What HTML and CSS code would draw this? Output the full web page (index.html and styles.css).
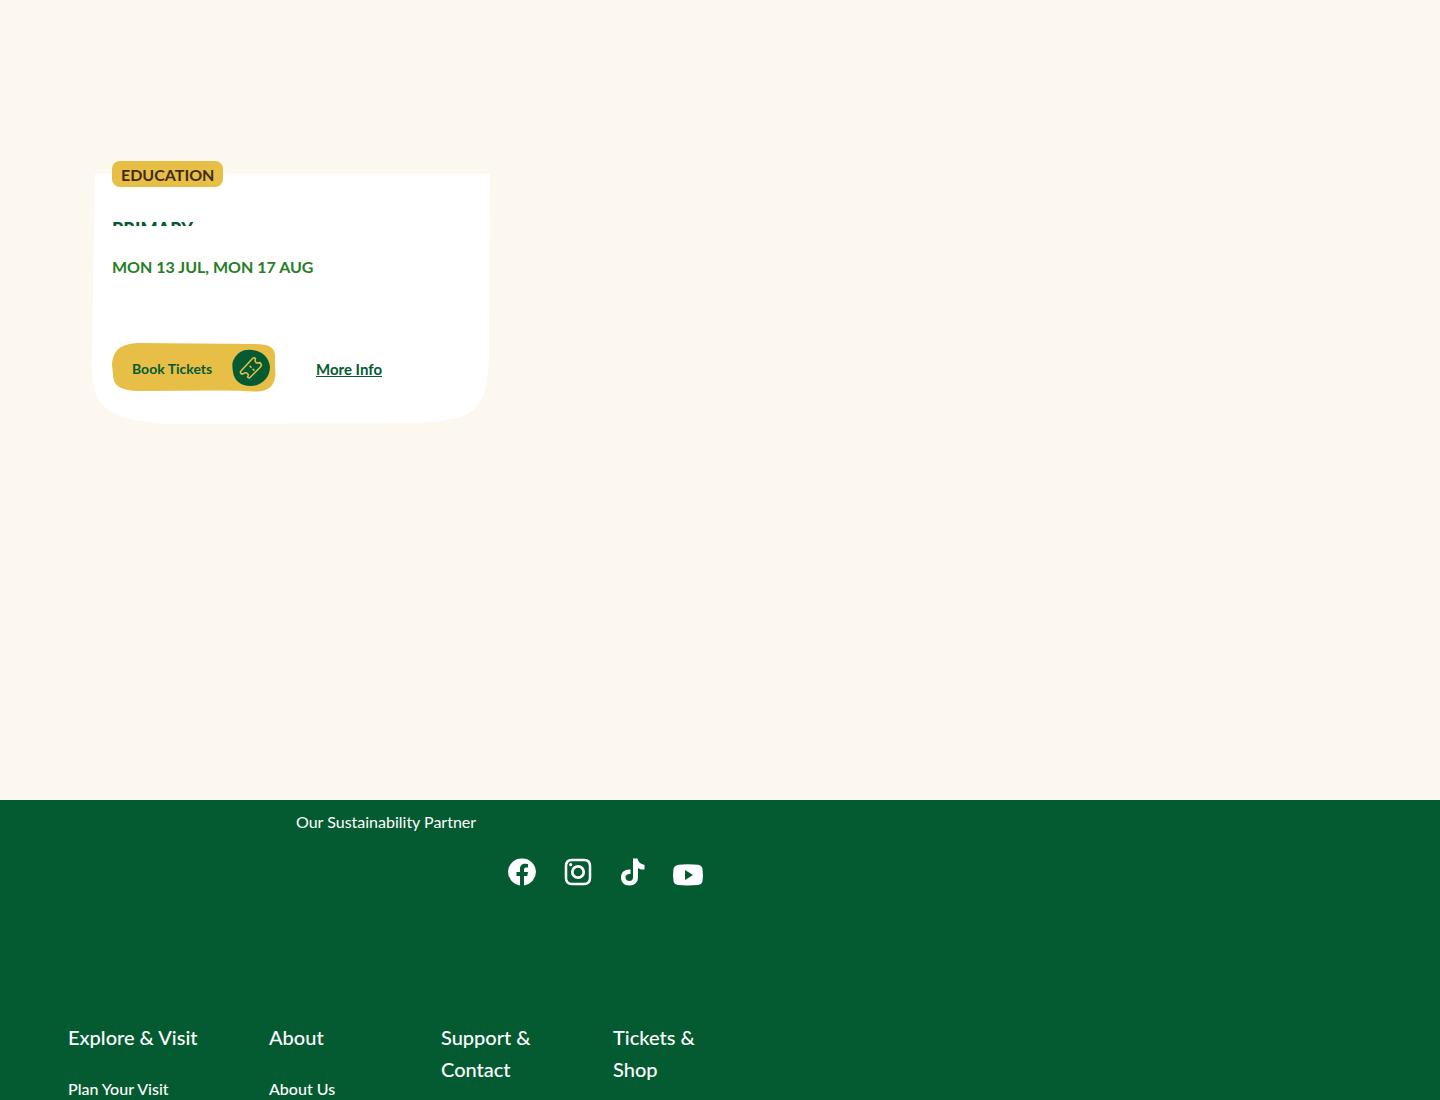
FILE: index.html
```html
<!DOCTYPE html>
<html lang="en">
<head>
<meta charset="utf-8">
<meta name="viewport" content="width=device-width, initial-scale=1">
<title>Events</title>
<link rel="stylesheet" href="styles.css">
</head>
<body>
<main class="events">
  <article class="card">
    <svg class="card-shape" viewBox="0 0 398 250" preserveAspectRatio="none" aria-hidden="true"><path d="M3 0H398L397 185C395 222 389 234 371 242C360 246 343 248 320 249L75 250C48 248 31 245 20 238C4 229 0 215 0 190L1 110Z"/></svg>
    <span class="badge">EDUCATION</span>
    <h2 class="card-title">PRIMARY</h2>
    <p class="card-dates">MON 13 JUL, MON 17 AUG</p>
    <div class="card-actions">
      <button class="book" type="button">
        <svg class="book-shape" viewBox="0 0 164 49" preserveAspectRatio="none" aria-hidden="true"><path d="M27 0L143 1C158 1 164 5 163 15L163 22L163.500 32C162 44 156 49 142 48.500Q122 47 104 47.500L25 48C7 47 1 42 1 31L0 22C1 7 8 1 27 0Z"/></svg>
        <span class="book-label">Book Tickets</span>
        <svg class="ticket" viewBox="0 0 38 38" aria-hidden="true"><path class="ticket-disc" d="M2 10C6 3 12 0 20 1C30 2 37 8 38 18C38 29 29 37 19 37C8 37 2 31 1 23C0 17 0 13 2 10Z"/><path class="ticket-line" d="M8.500 22.500L20.500 9.500Q22 8 23.500 9.500Q22.500 12 24 13.500Q26 14.500 28 13.500L29.500 16Q29 17.500 27.500 19L18 28.500Q17 29.500 15.500 28Q17 26 15.500 24.500Q13.500 23 11 25Q8 25 8.500 22.500ZM18 17.200L19 18.200M21 20.200L22 21.200"/></svg>
      </button>
      <a class="more" href="#">More Info</a>
    </div>
  </article>
</main>
<footer class="footer">
  <div class="footer-inner">
    <p class="partner">Our Sustainability Partner</p>
    <nav class="social" aria-label="Social media">
      <a href="#" aria-label="Facebook"><svg width="28" height="28" viewBox="0 0 28 28"><path fill="currentColor" d="M14 .5A13.500 13.500 0 0 0 12 27.400V18H8.500V14H12V11C12 7.600 14 5.700 17 5.700Q18.500 5.700 20 6V9.500H18Q16 9.500 16 11.500V14H20L19.300 18H16V27.400A13.500 13.500 0 0 0 14 .5Z"/></svg></a>
      <a href="#" aria-label="Instagram"><svg width="28" height="28" viewBox="0 0 28 28" fill="none" stroke="currentColor"><path stroke-width="2.500" d="M8 2H20Q26 2 26 8V20Q26 26 20 26H8Q2 26 2 20V8Q2 2 8 2Z"/><circle cx="14" cy="14" r="5.700" stroke-width="2.700"/><circle cx="6.700" cy="6.700" r="1.600" fill="currentColor" stroke="none"/></svg></a>
      <a href="#" aria-label="TikTok"><svg width="25" height="28" viewBox="0 0 24 28"><path fill="currentColor" d="M12.500 .5H17C17.500 4 20 6 24 7V11.500Q20 12 17.500 10V19C17.500 24.500 14 27.500 9 27.500C3.500 27.500 .5 24 .5 19.500C.5 14 4.500 11 10 11.500V16C7 15.500 5 17 5 19.300C5 21.500 6.500 23 9 23C11.500 23 12.500 21.500 12.500 19Z"/></svg></a>
      <a href="#" aria-label="YouTube"><svg width="30" height="22" viewBox="0 0 30 22"><path fill="currentColor" fill-rule="evenodd" d="M6 .7L15 .3L25 .7Q29 1.500 29.500 5L30 12L29.500 17Q29 20.500 25 21L14 21.500L5 21Q1 20.500 .5 17L0 11L.5 5Q1 1.500 6 .7ZM12 6V16L20 11Z"/></svg></a>
    </nav>
    <nav class="links" aria-label="Footer">
      <section><h3>Explore &amp; Visit</h3><a href="#">Plan Your Visit</a></section>
      <section><h3>About</h3><a href="#">About Us</a></section>
      <section><h3>Support &amp; Contact</h3></section>
      <section><h3>Tickets &amp; Shop</h3></section>
    </nav>
  </div>
</footer>
</body>
</html>
```
FILE: styles.css
```css
* { box-sizing: border-box; }
body {
  margin: 0;
  min-height: 100vh;
  display: flex;
  flex-direction: column;
  background: #fcf8ef;
  color: #055b31;
  font-family: Lato, "Noto Sans", sans-serif;
}
h2, h3, p { margin: 0; }
.events { padding: 174px 92px 376px; }
.card {
  position: relative;
  max-width: 398px;
  padding: 48px 20px 32px;
}
.card-shape {
  position: absolute;
  inset: 0;
  width: 100%;
  height: 100%;
  fill: #fff;
}
.badge {
  position: absolute;
  top: -13px;
  left: 20px;
  padding: 2px 9px 0;
  border-radius: 8px;
  background: #e7bf46;
  color: #422b19;
  font-size: 16px;
  font-weight: 700;
  line-height: 24px;
}
.card-title {
  position: relative;
  height: 4px;
  overflow: hidden;
  font-size: 18px;
  font-weight: 900;
  line-height: 14px;
}
.card-dates {
  position: relative;
  padding: 29px 0 64px;
  color: #267d28;
  font-size: 16px;
  font-weight: 700;
  line-height: 24px;
}
.card-actions {
  position: relative;
  display: flex;
  align-items: center;
  gap: 40px;
}
.book {
  position: relative;
  display: flex;
  align-items: center;
  justify-content: space-between;
  min-width: 164px;
  padding: 6px 6px 5px 20px;
  border: 0;
  background: none;
  color: inherit;
  font: 700 14px/24px Lato, "Noto Sans", sans-serif;
  cursor: pointer;
}
.book-shape {
  position: absolute;
  inset: 0;
  width: 100%;
  height: 100%;
  fill: #e7bf46;
}
.book-label { position: relative; padding-top: 2px; }
.ticket { position: relative; width: 38px; height: 38px; }
.ticket-disc { fill: #055b31; }
.ticket-line {
  fill: none;
  stroke: #e7bf46;
  stroke-width: 1.500;
  stroke-linecap: round;
  stroke-linejoin: round;
}
.more {
  padding-top: 2px;
  color: inherit;
  font-size: 15px;
  font-weight: 700;
  line-height: 24px;
}
.footer {
  flex: 1;
  padding: 10px 68px 0;
  background: #055b31;
  color: #fff;
}
.footer-inner { max-width: 652px; }
.partner {
  padding-left: 228px;
  font-size: 16px;
  line-height: 24px;
}
.social {
  display: flex;
  align-items: flex-end;
  gap: 28px;
  padding: 24px 0 0 440px;
}
.social a { display: flex; color: inherit; }
.links {
  display: grid;
  grid-template-columns: 201fr 172fr 172fr 107fr;
  padding-top: 135px;
}
.links h3 {
  max-width: 140px;
  font-size: 20px;
  font-weight: 500;
  line-height: 32px;
}
.links a {
  display: inline-block;
  padding-top: 24px;
  color: inherit;
  font-size: 16px;
  font-weight: 500;
  line-height: 24px;
  text-decoration: none;
}
```
